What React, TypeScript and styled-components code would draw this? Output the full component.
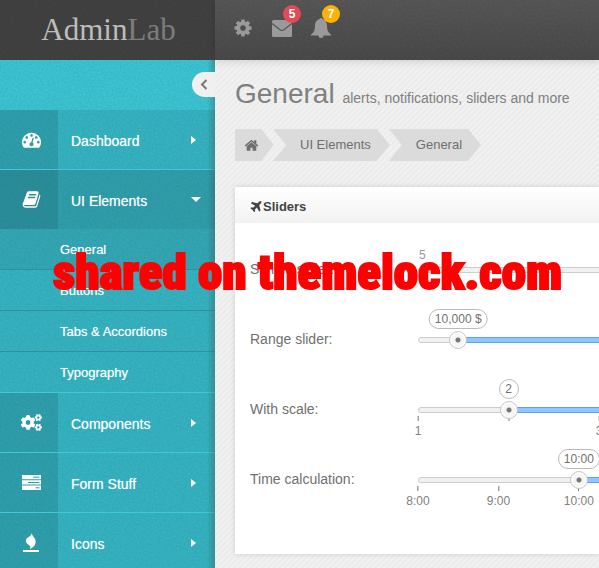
import React, { useState } from 'react';
import styled, { createGlobalStyle } from 'styled-components';
import { FaCogs } from 'react-icons/fa';

const grain =
  "url(\"data:image/svg+xml,%3Csvg xmlns='http://www.w3.org/2000/svg' width='120' height='120'%3E%3Cfilter id='n'%3E%3CfeTurbulence type='fractalNoise' baseFrequency='0.5' numOctaves='2' stitchTiles='stitch'/%3E%3CfeColorMatrix values='0 0 0 0 0 0 0 0 0 0 0 0 0 0 0 0.14 0 0 0 -0.03'/%3E%3C/filter%3E%3Crect width='120' height='120' filter='url(%23n)'/%3E%3C/svg%3E\")";

const GlobalStyle = createGlobalStyle`
  *, *::before, *::after { box-sizing: border-box; }
  html, body { margin: 0; overflow-x: hidden; }
  body {
    font-family: "Liberation Sans", Arial, sans-serif;
    font-size: 14px;
    line-height: 20px;
    color: #777;
    background: #eee;
  }
`;

const Page = styled.div`
  position: relative;
  display: grid;
  grid-template-columns: 215px minmax(0, 1fr);
  grid-template-rows: 60px 1fr;
  min-height: 100vh;
  overflow: hidden;
`;

const Brand = styled.a`
  display: flex;
  align-items: center;
  justify-content: center;
  padding-left: 2px;
  background: ${grain}, #424242;
  color: #bdbdbd;
  font: 31px/60px "Liberation Serif", "Times New Roman", serif;
  text-decoration: none;

  span { color: #7c7c7c; }
`;

const TopBar = styled.header`
  display: flex;
  align-items: flex-start;
  gap: 19px;
  padding: 18px 18px 0;
  background: ${grain}, linear-gradient(#585858, #4a4a4a);
  box-shadow: 0 1px 8px rgba(0, 0, 0, 0.15);
  z-index: 1;
`;

const IconButton = styled.button`
  position: relative;
  display: flex;
  align-items: center;
  justify-content: center;
  height: 20px;
  padding: 0;
  border: 0;
  background: none;
  color: #9a9a9a;
`;

const Badge = styled.span<{ $color: string }>`
  position: absolute;
  top: -13px;
  right: -9px;
  width: 18px;
  height: 18px;
  border-radius: 9px;
  background: ${(p) => p.$color};
  color: #fff;
  font-size: 12px;
  font-weight: bold;
  line-height: 18px;
  text-align: center;
`;

const Sidebar = styled.nav`
  position: relative;
  padding-top: 50px;
  background: ${grain}, #3cc6d5;
  font-size: 14px;

  &::after {
    content: "";
    position: absolute;
    inset: 0 0 0 auto;
    width: 8px;
    background: linear-gradient(to right, rgba(60, 80, 84, 0), rgba(60, 80, 84, 0.35));
    pointer-events: none;
  }
`;

const Collapse = styled.button`
  position: absolute;
  z-index: 1;
  top: 12px;
  right: 0;
  display: flex;
  align-items: center;
  width: 23px;
  height: 25px;
  padding: 0 0 0 8px;
  border: 0;
  border-radius: 13px 0 0 13px;
  background: #f0f0f0;
  color: #777;
`;

const Menu = styled.ul`
  margin: 0;
  padding: 0;
  list-style: none;
`;

const MenuLink = styled.a<{ $open?: boolean }>`
  display: flex;
  align-items: center;
  height: ${(p) => (p.$open ? 59 : 60)}px;
  padding-right: ${(p) => (p.$open ? 14 : 19)}px;
  border-bottom: ${(p) => (p.$open ? 0 : 1)}px solid #3fc9d8;
  background: ${(p) => (p.$open ? 'rgba(32, 100, 110, 0.4)' : 'rgba(32, 110, 120, 0.2)')};
  color: #fff;
  text-decoration: none;
  text-shadow: 0 0 1px rgba(255, 255, 255, 0.5);
`;

const IconCell = styled.span`
  display: flex;
  flex: none;
  align-items: center;
  justify-content: center;
  align-self: stretch;
  width: 58px;
  padding-left: 4px;
  background: rgba(20, 80, 90, 0.2);
`;

const MenuText = styled.span`
  flex: 1;
  padding: 2px 0 0 13px;
`;

const SubLink = styled.a<{ $active?: boolean; $last?: boolean }>`
  display: block;
  height: 41px;
  padding-left: 60px;
  border-bottom: 1px solid ${(p) => (p.$last ? '#3fc9d8' : '#2e929e')};
  background: ${(p) => (p.$active ? 'rgba(32, 100, 110, 0.3)' : 'rgba(32, 110, 120, 0.2)')};
  color: #fff;
  font-size: 13px;
  line-height: 41px;
  text-decoration: none;
  text-shadow: 0 0 1px rgba(255, 255, 255, 0.5);
`;

const Main = styled.main`
  min-width: 0;
  padding: 16px 0 14px 20px;
  overflow: hidden;
  background: repeating-linear-gradient(135deg, #ebebec 0 1px, #f1f1f2 2px 3px, #ebebec 4px);
`;

const Title = styled.h1`
  margin: 0;
  color: #808080;
  font-size: 28px;
  font-weight: normal;
  line-height: 36px;

  small {
    font-size: 14px;
  }
`;

const Crumbs = styled.ol`
  display: flex;
  margin: 13px 0 26px;
  padding: 0;
  list-style: none;
  font-size: 13px;
`;

const Crumb = styled.li<{ $first?: boolean }>`
  margin-left: ${(p) => (p.$first ? 0 : -1)}px;
  clip-path: polygon(
    0 0,
    calc(100% - 13px) 0,
    100% 50%,
    calc(100% - 13px) 100%,
    0 100%,
    ${(p) => (p.$first ? '0' : '13px')} 50%
  );
  background: #dbdbdb;

  a {
    display: flex;
    align-items: center;
    height: 32px;
    padding: ${(p) => (p.$first ? '0 15px 0 9px' : '0 19px 0 27px')};
    color: #6e6e6e;
    text-decoration: none;
  }
`;

const Card = styled.section`
  background: #fff;
  box-shadow: 0 0 5px rgba(0, 0, 0, 0.14);
`;

const CardHead = styled.h2`
  display: flex;
  align-items: center;
  height: 36px;
  margin: 0;
  padding: 3px 14px 0;
  background: linear-gradient(#fff, #f2f2f2);
  color: #444;
  font-size: 13px;
`;

const CardBody = styled.div`
  padding: 11px 0 40px 15px;
  color: #707070;
`;

const Row = styled.div`
  display: flex;
  align-items: center;
  height: 70px;
`;

const RowLabel = styled.label`
  flex: 0 0 168px;
`;

const SliderBox = styled.div`
  position: relative;
  flex: 1 0 724px;
  height: 6px;
  margin-top: 2px;
  font-size: 12px;
  line-height: 18px;
`;

const Track = styled.div`
  height: 6px;
  overflow: hidden;
  border: 1px solid #cdcdcd;
  border-radius: 3px;
  background: #f1f1f1;
`;

const Fill = styled.div`
  position: absolute;
  top: 0;
  right: 0;
  height: 6px;
  border: solid #5ba3ee;
  border-width: 1px 0;
  background: #90c6fd;
`;

const Range = styled.input`
  position: absolute;
  top: -6px;
  left: -9px;
  width: calc(100% + 18px);
  height: 18px;
  margin: 0;
  appearance: none;
  background: none;

  &::-webkit-slider-thumb {
    appearance: none;
    width: 18px;
    height: 18px;
    border: 1px solid #c6c6c6;
    border-radius: 9px;
    background: radial-gradient(circle, #777 0 2px, #f5f5f5 3px 5px, #fff 8px);
  }
`;

const Bubble = styled.output`
  position: absolute;
  top: -28px;
  min-width: 20px;
  padding: 0 5px;
  border: 1px solid #bbb;
  border-radius: 10px;
  background: #fff;
  color: #707070;
  text-align: center;
  white-space: nowrap;
  transform: translateX(-50%);
`;

const Limit = styled.span`
  position: absolute;
  top: -21px;
  left: 1px;
  color: #999;
`;

const Tick = styled.span`
  position: absolute;
  top: 9px;
  display: flex;
  flex-direction: column;
  align-items: center;
  gap: 1px;
  color: #808080;
  transform: translateX(-50%);

  &::before {
    content: "";
    width: 1px;
    height: 5px;
    background: #777;
  }
`;

const Watermark = styled.div`
  position: absolute;
  z-index: 2;
  top: 248px;
  left: 53px;
  color: #f00;
  font: 900 49px/50px "Roboto Condensed", Roboto, sans-serif;
  -webkit-text-stroke: 2px #f00;
  white-space: nowrap;
  pointer-events: none;
`;

const paths = {
  cog: 'M1152 896q0-106-75-181t-181-75-181 75-75 181 75 181 181 75 181-75 75-181zm512-109v222q0 12-8 23t-20 13l-185 28q-19 54-39 91 35 50 107 138 10 12 10 25t-9 23q-27 37-99 108t-94 71q-12 0-26-9l-138-108q-44 23-91 38-16 136-29 186-7 28-36 28h-222q-14 0-24.500-8.500t-11.500-21.500l-28-184q-49-16-90-37l-141 107q-10 9-25 9-14 0-25-11-126-114-165-168-7-10-7-23 0-12 8-23 15-21 51-66.500t54-70.500q-27-50-41-99l-183-27q-13-2-21-12.500t-8-23.500v-222q0-12 8-23t19-13l186-28q14-46 39-92-40-57-107-138-10-12-10-24 0-10 9-23 26-36 98.500-107.500t94.500-71.500q13 0 26 10l138 107q44-23 91-38 16-136 29-186 7-28 36-28h222q14 0 24.500 8.500t11.500 21.500l28 184q49 16 90 37l142-107q9-9 24-9 13 0 25 10 129 119 165 170 7 8 7 22 0 12-8 23-15 21-51 66.500t-54 70.500q26 50 41 98l183 28q13 2 21 12.500t8 23.500z',
  gauge: 'M384 1152q0-53-37.500-90.500t-90.500-37.500-90.500 37.500-37.500 90.500 37.500 90.500 90.500 37.500 90.500-37.500 37.500-90.500zm192-448q0-53-37.500-90.500t-90.500-37.500-90.500 37.500-37.500 90.500 37.500 90.500 90.500 37.500 90.500-37.500 37.500-90.500zm428 481l101-382q6-26-7.500-48.500t-38.500-29.500-48 6.500-30 39.500l-101 382q-60 5-107 43.500t-63 98.500q-20 77 20 146t117 89 146-20 89-117q16-60-6-117t-72-91zm660-33q0-53-37.500-90.500t-90.500-37.500-90.500 37.500-37.500 90.500 37.500 90.500 90.500 37.500 90.500-37.500 37.500-90.500zm-640-640q0-53-37.500-90.500t-90.500-37.500-90.500 37.500-37.500 90.500 37.500 90.500 90.500 37.500 90.500-37.500 37.500-90.500zm448 192q0-53-37.500-90.500t-90.500-37.500-90.500 37.500-37.500 90.500 37.500 90.500 90.500 37.500 90.500-37.500 37.500-90.500zm320 448q0 261-141 483-19 29-54 29h-1402q-35 0-54-29-141-221-141-483 0-182 71-348t191-286 286-191 348-71 348 71 286 191 191 286 71 348z',
  book: 'M1703 478q40 57 18 129l-275 906q-19 64-76.500 107.500t-122.500 43.500h-923q-77 0-148.500-53.500t-99.500-131.500q-24-67-2-127 0-4 3-27t4-37q1-8-3-21.500t-3-19.500q2-11 8-21t16.500-23.500 16.500-23.500q23-38 45-91.500t30-91.500q3-10 .5-30t-.5-28q3-11 17-28t17-23q21-36 42-92t25-90q1-9-2.500-32t.5-28q4-13 22-30.500t22-22.500q19-26 42.500-84.500t27.500-96.500q1-8-3-25.500t-2-26.500q2-8 9-18t18-23 17-21q8-12 16.500-30.500t15-35 16-36 19.500-32 26.500-23.500 36-11.500 47.500 5.500l-1 3q38-9 51-9h761q74 0 114 56t18 130l-274 906q-36 119-71.500 153.500t-128.500 34.500h-869q-27 0-38 15-11 16-1 43 24 70 144 70h923q29 0 56-15.500t35-41.500l300-987q7-22 5-57 38 15 59 43zm-1064 2q-4 13 2 22.500t20 9.500h608q13 0 25.500-9.500t16.500-22.500l21-64q4-13-2-22.500t-20-9.500h-608q-13 0-25.500 9.500t-16.500 22.500zm-83 256q-4 13 2 22.500t20 9.500h608q13 0 25.500-9.500t16.500-22.500l21-64q4-13-2-22.500t-20-9.500h-608q-13 0-25.500 9.500t-16.500 22.500z',
  home: 'M1472 992v480q0 26-19 45t-45 19h-384v-384h-256v384h-384q-26 0-45-19t-19-45v-480q0-1 .5-3t.5-3l575-474 575 474q1 2 1 6zm223-69l-62 74q-8 9-21 11h-3q-13 0-21-7l-692-577-692 577q-12 8-24 7-13-2-21-11l-62-74q-8-10-7-23.500t11-21.500l719-599q32-26 76-26t76 26l244 204v-195q0-14 9-23t23-9h192q14 0 23 9t9 23v408l219 182q10 8 11 21.500t-7 23.500z',
  plane: 'M1568 160q44 52 12 148t-108 172l-161 161 160 696q5 19-12 33l-128 96q-7 6-19 6-4 0-7-1-15-3-21-16l-279-508-259 259 53 194q5 17-8 31l-96 96q-9 9-23 9h-2q-15-2-24-13l-189-252-252-189q-11-7-13-23-1-13 9-25l96-97q9-9 23-9 6 0 8 1l194 53 259-259-508-279q-14-8-17-24-2-16 9-27l128-128q14-13 30-8l665 159 160-160q76-76 172-108t148 12z',
};

const Glyph = ({ name, size }: { name: keyof typeof paths; size: number }) => (
  <svg width={size} height={size} viewBox="0 0 1792 1792" fill="currentColor" aria-hidden="true">
    <path d={paths[name]} />
  </svg>
);

const Envelope = () => (
  <svg width="20" height="17" viewBox="0 0 20 17" aria-hidden="true">
    <rect width="20" height="17" rx="1.500" fill="currentColor" />
    <path d="M0 3.500 8.500 10q1.500 1 3 0L20 3.500" fill="none" stroke="#555" strokeWidth="1.200" />
  </svg>
);

const Bell = () => (
  <svg width="20" height="20" viewBox="0 0 20 20" fill="currentColor" aria-hidden="true">
    <path d="M10 0q1.400 0 1.500 1.300C15 2 16 5 16 8c0 4 1 6.500 4 8.500V17.500h-7.500a2.500 2.500 0 0 1-5 0H0V16.500C3 14.500 4 12 4 8c0-3 1-6 4.500-6.700Q8.600 0 10 0z" />
  </svg>
);

const Tasks = () => (
  <svg width="19" height="15" viewBox="0 0 19 15" aria-hidden="true">
    <path d="M0 0h19v4.300H0zM0 5.300h19v4.300H0zM0 10.600h19V15H0z" fill="#fff" />
    <path d="M11 2.200h6.500M6 7.500h11.500M13.500 12.800h4" stroke="#2f9ca9" strokeWidth="1" />
  </svg>
);

const Fire = () => (
  <svg width="16" height="20" viewBox="0 0 16 20" fill="#fff" aria-hidden="true">
    <path d="M8.300 0c.8 3 4.700 5 4.300 9.500-.3 3-2.300 4.600-5.600 6.800.6-2 .5-3-.6-3.900C4 11 2.400 9.500 3 6.800 3.800 4 8.600 3.800 8.300 0z" />
    <rect y="17" width="16" height="2" />
  </svg>
);

const Caret = ({ down }: { down?: boolean }) =>
  down ? (
    <svg width="10" height="5" viewBox="0 0 10 5" aria-hidden="true">
      <path d="M0 0h10L5 5z" fill="#fff" />
    </svg>
  ) : (
    <svg width="5" height="8" viewBox="0 0 5 8" aria-hidden="true">
      <path d="M0 0v8l5-4z" fill="#fff" />
    </svg>
  );

const menu = [
  { label: 'Dashboard', icon: <Glyph name="gauge" size={19} /> },
  {
    label: 'UI Elements',
    icon: <Glyph name="book" size={19} />,
    children: ['General', 'Buttons', 'Tabs & Accordions', 'Typography'],
  },
  { label: 'Components', icon: <FaCogs size={21} /> },
  { label: 'Form Stuff', icon: <Tasks /> },
  { label: 'Icons', icon: <Fire /> },
];

type SliderProps = {
  id: string;
  label: string;
  min: number;
  max: number;
  start: number;
  step?: number;
  format?: (v: number) => string;
  ticks?: { at: number; text?: string }[];
  limit?: string;
};

function Slider({ id, label, min, max, start, step = 1, format, ticks = [], limit }: SliderProps) {
  const [value, setValue] = useState(start);
  const percent = (v: number) => `${((v - min) / (max - min)) * 100}%`;
  return (
    <Row>
      <RowLabel htmlFor={id}>{label}</RowLabel>
      <SliderBox>
        <Track />
        {format && <Fill style={{ left: percent(value) }} />}
        {limit && <Limit>{limit}</Limit>}
        {ticks.map((t) => (
          <Tick key={t.at} style={{ left: percent(t.at) }}>
            {t.text}
          </Tick>
        ))}
        {format && (
          <Bubble htmlFor={id} style={{ left: percent(value) }}>
            {format(value)}
          </Bubble>
        )}
        <Range
          id={id}
          type="range"
          min={min}
          max={max}
          step={step}
          value={value}
          onChange={(e) => setValue(Number(e.target.value))}
        />
      </SliderBox>
    </Row>
  );
}

export default function App() {
  return (
    <>
      <GlobalStyle />
      <Page>
        <Brand href="#">
          <div>
            Admin<span>Lab</span>
          </div>
        </Brand>
        <TopBar>
          <IconButton aria-label="Settings">
            <Glyph name="cog" size={20} />
          </IconButton>
          <IconButton aria-label="Messages">
            <Envelope />
            <Badge $color="#e14b58">5</Badge>
          </IconButton>
          <IconButton aria-label="Notifications">
            <Bell />
            <Badge $color="#fdb205">7</Badge>
          </IconButton>
        </TopBar>
        <Sidebar>
          <Collapse aria-label="Collapse menu">
            <svg width="8" height="11" viewBox="0 0 8 11" aria-hidden="true">
              <path d="M6.500 1 2 5.500 6.500 10" fill="none" stroke="currentColor" strokeWidth="2" />
            </svg>
          </Collapse>
          <Menu>
            {menu.map((item) => (
              <li key={item.label}>
                <MenuLink href="#" $open={!!item.children}>
                  <IconCell>{item.icon}</IconCell>
                  <MenuText>{item.label}</MenuText>
                  <Caret down={!!item.children} />
                </MenuLink>
                {item.children && (
                  <Menu>
                    {item.children.map((child, i) => (
                      <li key={child}>
                        <SubLink href="#" $active={i === 0} $last={i === 3}>
                          {child}
                        </SubLink>
                      </li>
                    ))}
                  </Menu>
                )}
              </li>
            ))}
          </Menu>
        </Sidebar>
        <Main>
          <Title>
            General <small>alerts, notifications, sliders and more</small>
          </Title>
          <Crumbs>
            <Crumb $first>
              <a href="#" aria-label="Home">
                <Glyph name="home" size={15} />
              </a>
            </Crumb>
            <Crumb>
              <a href="#">UI Elements</a>
            </Crumb>
            <Crumb>
              <a href="#">General</a>
            </Crumb>
          </Crumbs>
          <Card>
            <CardHead>
              <Glyph name="plane" size={14} />
              Sliders
            </CardHead>
            <CardBody>
              <Slider id="simple" label="Simple slider:" min={5} max={50} start={35} limit="5" />
              <Slider
                id="range"
                label="Range slider:"
                min={0}
                max={180000}
                start={10000}
                step={1000}
                format={(v) => `${v.toLocaleString('en-US')} $`}
              />
              <Slider
                id="scale"
                label="With scale:"
                min={1}
                max={9}
                start={2}
                format={String}
                ticks={[{ at: 1, text: '1' }, { at: 2 }, { at: 3, text: '3' }]}
              />
              <Slider
                id="time"
                label="Time calculation:"
                min={8}
                max={17}
                start={10}
                format={(v) => `${v}:00`}
                ticks={[
                  { at: 8, text: '8:00' },
                  { at: 9, text: '9:00' },
                  { at: 10, text: '10:00' },
                ]}
              />
            </CardBody>
          </Card>
        </Main>
        <Watermark>shared on themelock.com</Watermark>
      </Page>
    </>
  );
}
